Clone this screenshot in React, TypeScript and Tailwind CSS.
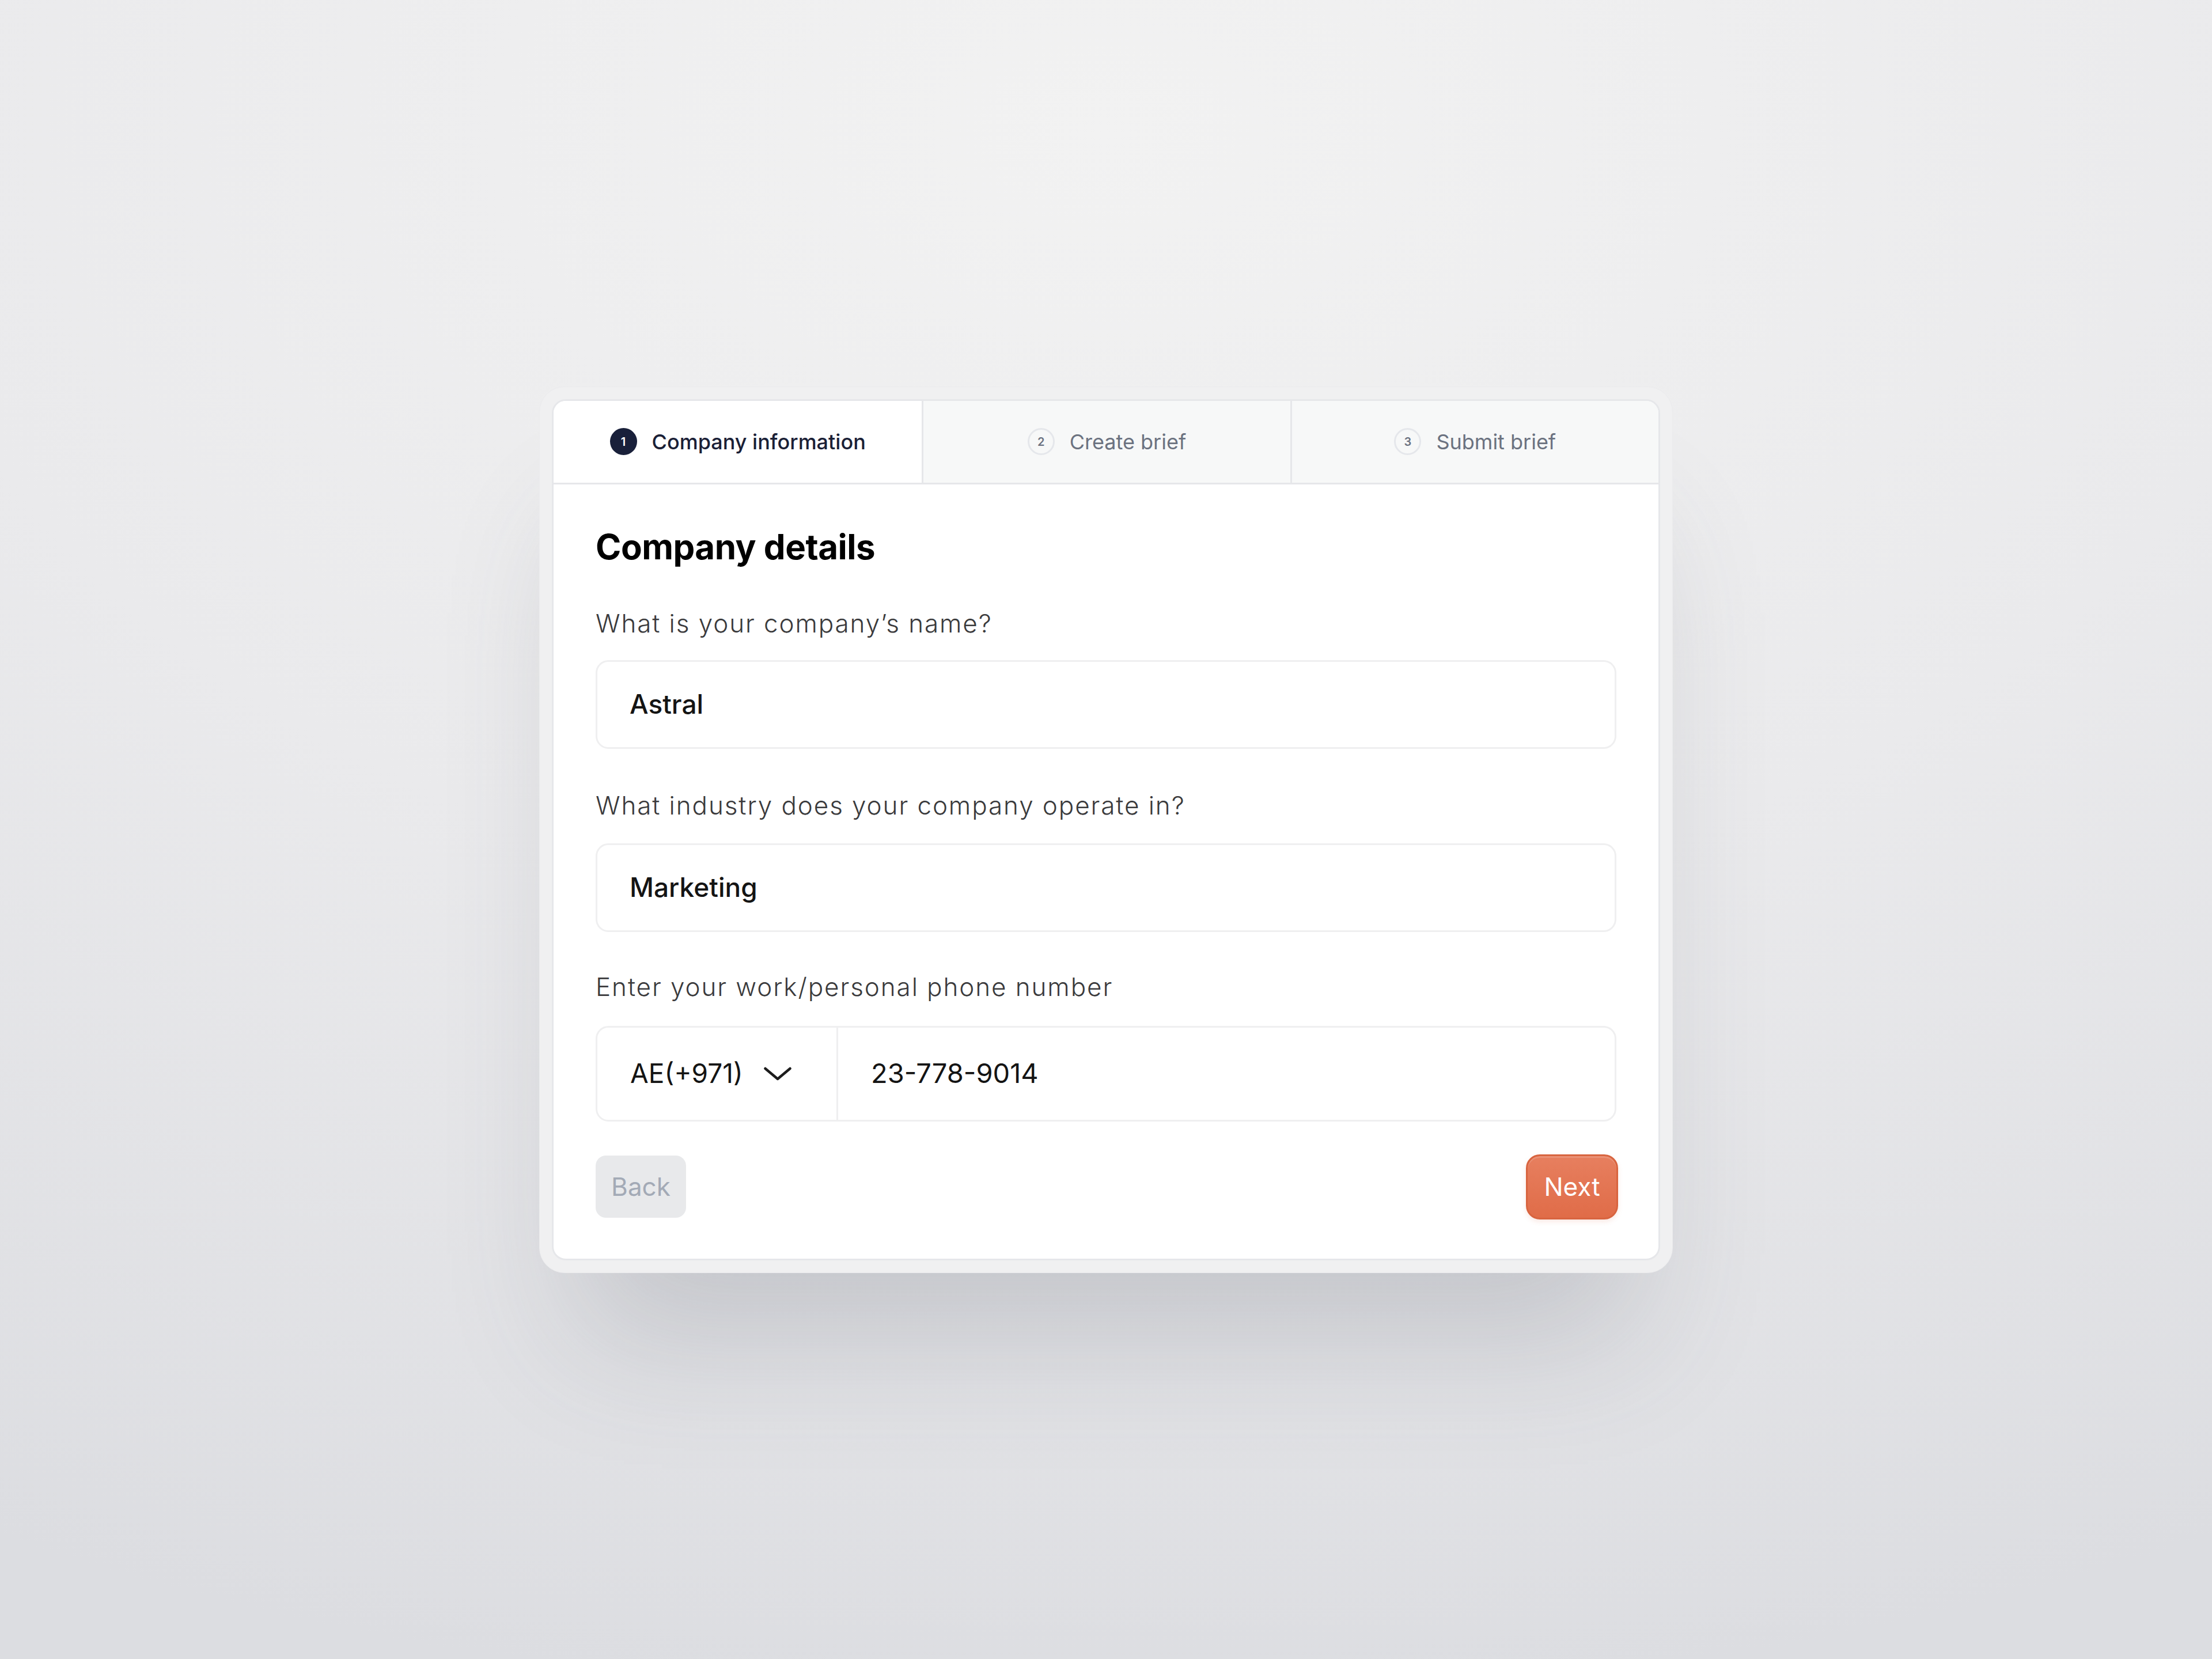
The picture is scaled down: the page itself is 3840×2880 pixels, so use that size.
import React from 'react';

const steps = [
  { n: 1, label: 'Company information', active: true },
  { n: 2, label: 'Create brief', active: false },
  { n: 3, label: 'Submit brief', active: false },
];

const Chevron = () => (
  <svg width="48" height="24" viewBox="0 0 48 24" fill="none" className="shrink-0">
    <path d="M2.5 3L24 21L45.5 3" stroke="#1c1c1c" strokeWidth="4.5" strokeLinecap="round" strokeLinejoin="round" />
  </svg>
);

const App: React.FC = () => {
  return (
    <div className="min-h-screen w-full flex items-center justify-center font-['Inter',sans-serif] bg-[radial-gradient(110%_95%_at_50%_8%,#f2f2f2_0%,#eaeaec_50%,#dcdde1_100%)]">
      <div className="w-[1968px] p-[21px] rounded-[44px] bg-[#f0f0f1] border border-[#ebebed] shadow-[0_180px_220px_-70px_rgba(70,74,90,0.20)]">
        <div className="bg-white rounded-[24px] border-[3px] border-[#e6e7ea] overflow-hidden">
          {/* steps */}
          <div className="grid grid-cols-3 h-[145px] border-b-[3px] border-[#e6e7ea]">
            {steps.map((s, i) => (
              <div
                key={s.n}
                className={`flex items-center justify-center gap-[26px] ${i > 0 ? 'border-l-[3px] border-[#e6e7ea]' : ''} ${s.active ? 'bg-white' : 'bg-[#f7f8f8]'}`}
              >
                {s.active ? (
                  <span className="w-[47px] h-[47px] rounded-full bg-[#19203a] text-white text-[20px] font-semibold flex items-center justify-center">
                    {s.n}
                  </span>
                ) : (
                  <span className="w-[47px] h-[47px] rounded-full border-[3px] border-[#e5e7eb] text-[#6b7280] text-[20px] font-semibold flex items-center justify-center">
                    {s.n}
                  </span>
                )}
                <span className={`text-[36px] leading-none ${s.active ? 'text-[#1a2036] font-medium' : 'text-[#6b7280]'}`}>
                  {s.label}
                </span>
              </div>
            ))}
          </div>

          {/* form */}
          <div className="px-[73px] pt-[78px] pb-[68px] flex flex-col">
            <h1 className="text-[60px] leading-none font-bold text-black tracking-[-0.5px]">Company details</h1>

            <label className="mt-[81px] text-[44px] leading-none font-light tracking-[1.9px] text-[#3a3a3c]">What is your company’s name?</label>
            <div className="mt-[42px] h-[154px] rounded-[22px] border-[3px] border-[#efeff0] flex items-center pl-[56px]">
              <span className="text-[46px] font-medium text-[#141414]">Astral</span>
            </div>

            <label className="mt-[76px] text-[44px] leading-none font-light tracking-[1.9px] text-[#3a3a3c]">What industry does your company operate in?</label>
            <div className="mt-[44px] h-[154px] rounded-[22px] border-[3px] border-[#efeff0] flex items-center pl-[56px]">
              <span className="text-[46px] font-medium text-[#141414]">Marketing</span>
            </div>

            <label className="mt-[73px] text-[44px] leading-none font-light tracking-[1.9px] text-[#3a3a3c]">Enter your work/personal phone number</label>
            <div className="mt-[46px] h-[166px] rounded-[22px] border-[3px] border-[#efeff0] flex">
              <div className="w-[418px] flex items-center pl-[57px] gap-[36px] border-r-[3px] border-[#efeff0]">
                <span className="text-[46px] text-[#141414]">AE(+971)</span>
                <Chevron />
              </div>
              <div className="flex-1 flex items-center pl-[57px]">
                <span className="text-[47px] text-[#141414]">23-778-9014</span>
              </div>
            </div>

            <div className="mt-[57px] flex items-center justify-between">
              <button className="w-[157px] h-[108px] rounded-[18px] bg-[#e8e9eb] text-[44px] text-[#a3aab6]">Back</button>
              <button className="-mr-[3px] w-[160px] h-[113px] rounded-[24px] border-[3px] border-[#d8643f] bg-[linear-gradient(180deg,#e77f5f_0%,#e06c48_100%)] text-[44px] text-white shadow-[inset_0_3px_0_rgba(255,255,255,0.15),0_4px_8px_rgba(224,108,72,0.15)]">
                Next
              </button>
            </div>
          </div>
        </div>
      </div>
    </div>
  );
};

export default App;
